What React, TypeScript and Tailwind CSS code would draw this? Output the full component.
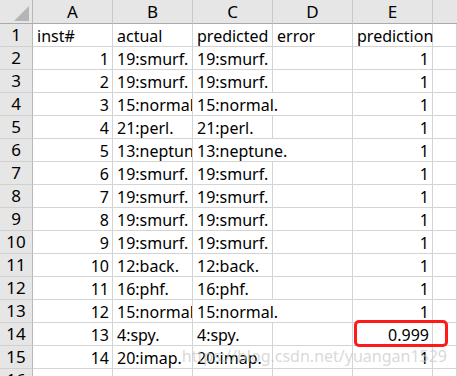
import React from "react";

type Row = { n: number; actual: string; predicted: string; pred: string };

const rows: Row[] = [
  { n: 1, actual: "19:smurf.", predicted: "19:smurf.", pred: "1" },
  { n: 2, actual: "19:smurf.", predicted: "19:smurf.", pred: "1" },
  { n: 3, actual: "15:normal.", predicted: "15:normal.", pred: "1" },
  { n: 4, actual: "21:perl.", predicted: "21:perl.", pred: "1" },
  { n: 5, actual: "13:neptune.", predicted: "13:neptune.", pred: "1" },
  { n: 6, actual: "19:smurf.", predicted: "19:smurf.", pred: "1" },
  { n: 7, actual: "19:smurf.", predicted: "19:smurf.", pred: "1" },
  { n: 8, actual: "19:smurf.", predicted: "19:smurf.", pred: "1" },
  { n: 9, actual: "19:smurf.", predicted: "19:smurf.", pred: "1" },
  { n: 10, actual: "12:back.", predicted: "12:back.", pred: "1" },
  { n: 11, actual: "16:phf.", predicted: "16:phf.", pred: "1" },
  { n: 12, actual: "15:normal.", predicted: "15:normal.", pred: "1" },
  { n: 13, actual: "4:spy.", predicted: "4:spy.", pred: "0.999" },
  { n: 14, actual: "20:imap.", predicted: "20:imap.", pred: "1" },
];

const long = new Set(["15:normal.", "13:neptune."]);

const cell =
  "h-[23px] border-r border-b border-[#d4d4d4] bg-white flex items-end whitespace-nowrap overflow-hidden leading-[18px] pb-px";
const rowHead =
  "h-[23px] border-r border-b border-r-[#b8b8b8] border-b-[#d0d0d0] bg-[#e6e6e6] flex items-end justify-center leading-[20px] text-[17px] pb-px";
const colHead =
  "h-[24px] border-r border-b border-r-[#c8c8c8] border-b-[#ababab] bg-[#e6e6e6] flex items-center justify-center text-[17px]";

export default function App() {
  return (
    <div className="relative h-[376px] w-[457px] overflow-hidden bg-white font-['Noto_Sans',sans-serif] text-[16px] text-black">
      <div className="grid grid-cols-[33px_80px_80px_80px_80px_80px_1fr]">
        <div className="h-[24px] border-r border-b border-r-[#b8b8b8] border-b-[#ababab] bg-[#e6e6e6] flex items-end justify-end pr-[3px] pb-[2px]">
          <svg width="15" height="15" viewBox="0 0 15 15">
            <polygon points="15,0 15,15 0,15" fill="#b5b5b5" />
          </svg>
        </div>
        {["A", "B", "C", "D", "E"].map((c) => (
          <div key={c} className={colHead}>
            {c}
          </div>
        ))}
        <div className="h-[24px] border-b border-b-[#ababab] bg-[#e6e6e6]" />

        <div className={rowHead}>1</div>
        <div className={`${cell} pl-1`}>inst#</div>
        <div className={`${cell} pl-1`}>actual</div>
        <div className={`${cell} pl-1`}>predicted</div>
        <div className={`${cell} pl-1`}>error</div>
        <div className={`${cell} pl-1 overflow-visible`}>prediction</div>
        <div className={cell} />

        {rows.map((r) => (
          <React.Fragment key={r.n}>
            <div className={rowHead}>{r.n + 1}</div>
            <div className={`${cell} justify-end pr-[3px]`}>{r.n}</div>
            <div className={`${cell} pl-1`}>{r.actual}</div>
            {long.has(r.predicted) ? (
              <div className={`${cell} col-span-2 pl-1`}>{r.predicted}</div>
            ) : (
              <>
                <div className={`${cell} pl-1`}>{r.predicted}</div>
                <div className={cell} />
              </>
            )}
            <div className={`${cell} justify-end pr-[3px]`}>{r.pred}</div>
            <div className={cell} />
          </React.Fragment>
        ))}

        <div className={rowHead}>16</div>
        <div className={cell} />
        <div className={cell} />
        <div className={cell} />
        <div className={cell} />
        <div className={cell} />
        <div className={cell} />
      </div>

      <div className="pointer-events-none absolute left-[354px] top-[320px] h-[27px] w-[94px] rounded-[5px] border-[3px] border-[#ff1a1a]" />

      <div className="pointer-events-none absolute right-[10px] top-[346px] whitespace-nowrap text-[16px] leading-[20px] text-[#c8c8c8]/70">
        https://blog.csdn.net/yuangan1529
      </div>
    </div>
  );
}
